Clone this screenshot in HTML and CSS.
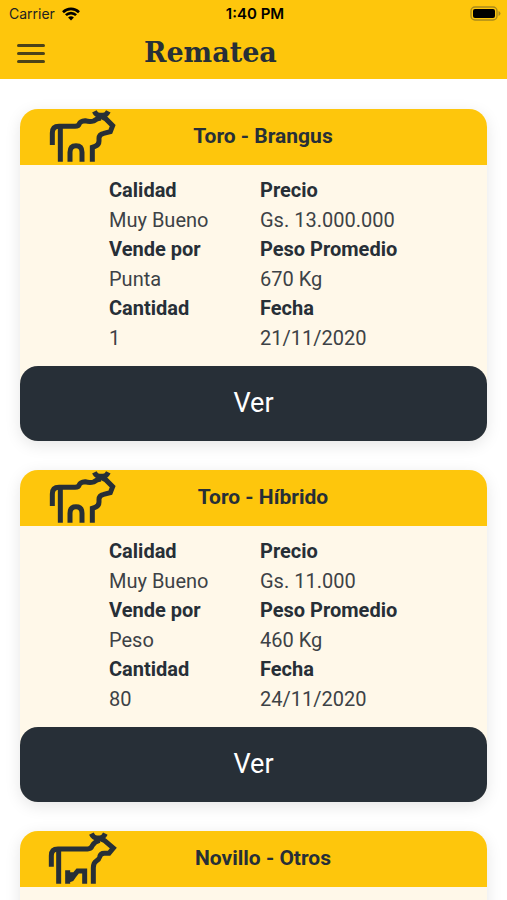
FILE: index.html
```html
<!DOCTYPE html>
<html lang="es">
<head>
    <meta charset="UTF-8">
    <meta name="viewport" content="width=device-width, initial-scale=1.0">
    <title>Rematea</title>
    <link rel="stylesheet" href="styles.css">
</head>
<body>
    <header class="top">
        <div class="status-bar">
            <div class="carrier">
                <span>Carrier</span>
                <svg width="18" height="14" viewBox="0 0 18 14" fill="none" stroke="#000" stroke-width="2.6">
                    <path d="M1 5.2a11.4 11.4 0 0 1 16 0M3.9 8.2a7.2 7.2 0 0 1 10.2 0"/>
                    <path d="M9 13.6l-2.9-3a4.1 4.1 0 0 1 5.8 0z" fill="#000" stroke="none"/>
                </svg>
            </div>
            <span class="time">1:40 PM</span>
            <svg class="battery" width="31" height="15" viewBox="0 0 31 15">
                <rect x="1" y="1" width="26" height="13" rx="4" fill="none" stroke="#a98a1c" stroke-width="1.4"/>
                <rect x="3" y="3" width="22" height="9" rx="2" fill="#000"/>
                <path d="M28.5 5v5q2-.8 2-2.5t-2-2.5z" fill="#a98a1c"/>
            </svg>
        </div>
        <nav class="nav">
            <button class="menu" type="button" aria-label="Menú">
                <span></span>
                <span></span>
                <span></span>
            </button>
            <h1 class="brand">Rematea</h1>
        </nav>
    </header>

    <main class="list">
        <article class="card">
            <div class="card-header">
                <svg class="animal" viewBox="24 13 208 156">
                    <path d="M36 118V82Q36 62 56 62H104Q115 62 117 54Q120 46 134 45Q148 50 160 46Q170 38 182 37"/>
                    <path d="M60 62V168M89 168V140Q89 120 107 120T125 140V168"/>
                    <path d="M162 17Q168 29 178 29H188Q198 29 204 17M180 31L196 39L217 60L210 78L190 83Q176 86 176 98V106Q176 118 164 122L156 125V168"/>
                </svg>
                <h2>Toro - Brangus</h2>
            </div>
            <div class="card-body">
                <dl>
                    <dt>Calidad</dt>
                    <dd>Muy Bueno</dd>
                    <dt>Vende por</dt>
                    <dd>Punta</dd>
                    <dt>Cantidad</dt>
                    <dd>1</dd>
                </dl>
                <dl>
                    <dt>Precio</dt>
                    <dd>Gs. 13.000.000</dd>
                    <dt>Peso Promedio</dt>
                    <dd>670 Kg</dd>
                    <dt>Fecha</dt>
                    <dd>21/11/2020</dd>
                </dl>
            </div>
            <button class="view" type="button">Ver</button>
        </article>

        <article class="card">
            <div class="card-header">
                <svg class="animal" viewBox="24 13 208 156">
                    <path d="M36 118V82Q36 62 56 62H104Q115 62 117 54Q120 46 134 45Q148 50 160 46Q170 38 182 37"/>
                    <path d="M60 62V168M89 168V140Q89 120 107 120T125 140V168"/>
                    <path d="M162 17Q168 29 178 29H188Q198 29 204 17M180 31L196 39L217 60L210 78L190 83Q176 86 176 98V106Q176 118 164 122L156 125V168"/>
                </svg>
                <h2>Toro - Híbrido</h2>
            </div>
            <div class="card-body">
                <dl>
                    <dt>Calidad</dt>
                    <dd>Muy Bueno</dd>
                    <dt>Vende por</dt>
                    <dd>Peso</dd>
                    <dt>Cantidad</dt>
                    <dd>80</dd>
                </dl>
                <dl>
                    <dt>Precio</dt>
                    <dd>Gs. 11.000</dd>
                    <dt>Peso Promedio</dt>
                    <dd>460 Kg</dd>
                    <dt>Fecha</dt>
                    <dd>24/11/2020</dd>
                </dl>
            </div>
            <button class="view" type="button">Ver</button>
        </article>

        <article class="card">
            <div class="card-header">
                <svg class="animal" viewBox="24 13 208 156">
                    <path d="M33 117V84Q33 64 53 64H142Q152 64 156 54Q162 42 178 38"/>
                    <path d="M55 64V168M82 168V128M133 168V130H112L103 141H84M82 158L94 154L103 141"/>
                    <path d="M153 18Q159 31 170 31H178Q189 31 195 18M174 31L192 38L219 61L206 77H192Q180 77 178 88Q176 96 168 100Q159 106 159 120V168"/>
                </svg>
                <h2>Novillo - Otros</h2>
            </div>
            <div class="card-body"></div>
        </article>
    </main>
</body>
</html>
```
FILE: styles.css
```css
* {
    box-sizing: border-box;
}

body {
    display: flex;
    flex-direction: column;
    height: 100vh;
    margin: 0;
    overflow: hidden;
    font-family: Roboto, sans-serif;
    color: #272f37;
    background-color: #fff;
}

h1, h2, dl, dd {
    margin: 0;
}

.top {
    flex-shrink: 0;
    background-color: #fec60c;
}

.status-bar {
    display: grid;
    grid-template-columns: 1fr auto 1fr;
    align-items: center;
    height: 27px;
    padding: 0 6px 0 9px;
    font-family: Inter, sans-serif;
    font-size: 14px;
    color: #222;
}

.carrier {
    display: flex;
    align-items: center;
    gap: 7px;
}

.time {
    font-size: 15px;
    font-weight: 600;
    color: #000;
}

.battery {
    justify-self: end;
}

.nav {
    display: flex;
    align-items: center;
    gap: 99px;
    height: 52px;
    padding: 0 17px;
}

.menu {
    display: flex;
    flex-direction: column;
    gap: 5px;
    width: 28px;
    padding: 0;
    background: none;
    border: none;
    cursor: pointer;
}

.menu span {
    height: 3px;
    background-color: #4b4319;
    border-radius: 2px;
}

.brand {
    font-family: "DejaVu Serif", serif;
    font-size: 27px;
    line-height: 50px;
}

.list {
    display: flex;
    flex-direction: column;
    flex: 1;
    gap: 29px;
    padding: 30px 20px;
    overflow: hidden;
}

.card {
    flex-shrink: 0;
    background-color: #fff8e9;
    border-radius: 18px;
    box-shadow: 0 4px 16px rgba(0, 0, 0, .1);
}

.card-header {
    display: flex;
    align-items: center;
    height: 56px;
    padding: 0 79px 3px 28px;
    background-color: #fec60c;
    border-radius: 18px 18px 0 0;
}

.card-header h2 {
    flex: 1;
    font-size: 21px;
    font-weight: 700;
    text-align: center;
}

.animal {
    width: 70px;
    height: 52px;
    fill: none;
    stroke: #272f37;
    stroke-width: 15;
    overflow: visible;
}

.card-body {
    display: grid;
    grid-template-columns: 151px 1fr;
    min-height: 201px;
    padding: 11px 0 12px 89px;
    font-size: 20px;
}

dt {
    font-weight: 700;
    line-height: 29px;
}

dd {
    line-height: 30px;
    color: #3d4246;
}

.view {
    display: block;
    width: 100%;
    height: 75px;
    padding: 0 0 2px;
    font-family: inherit;
    font-size: 27px;
    color: #fff;
    background-color: #272f37;
    border: none;
    border-radius: 18px;
    cursor: pointer;
}
```
